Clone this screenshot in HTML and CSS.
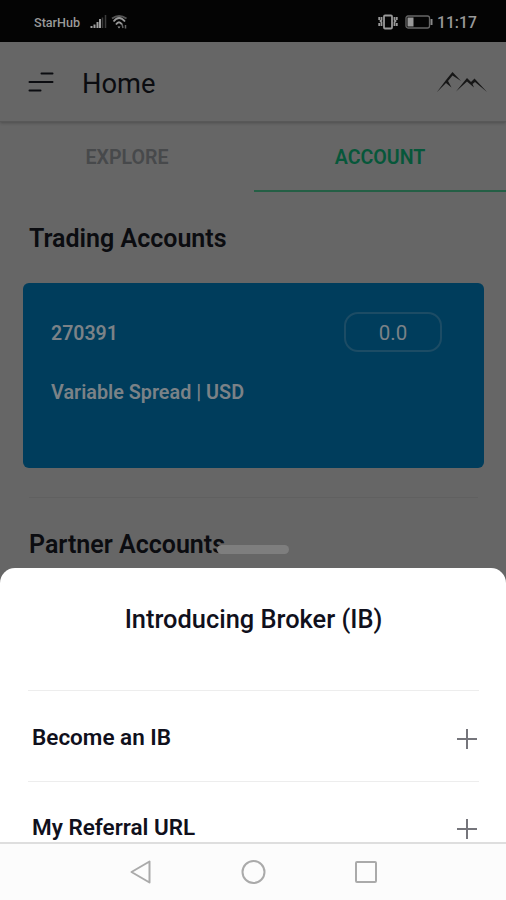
FILE: index.html
```html
<!DOCTYPE html>
<html lang="en">
<head>
	<meta charset="UTF-8">
	<title>Home</title>
	<link rel="stylesheet" href="styles.css">
</head>
<body>
	<div class="phone">
		<div class="status">
			<span class="carrier">StarHub</span>
			<svg class="signal" width="17" height="14" viewBox="0 0 17 14">
				<path d="M1.500 13v-2M4.500 13V9.500M7.500 13V7M10 13V4" stroke="#a0a0a0" stroke-width="2"/>
				<path d="M12.500 13V2.500M15.500 13V0" stroke="#3c3c3c" stroke-width="1.500"/>
			</svg>
			<svg class="wifi" width="17" height="14" viewBox="0 0 17 14" fill="none" stroke="#999" stroke-width="1.800">
				<path d="M1 3.500Q8-1.500 15.500 3.500" stroke="#555"/>
				<path d="M2.500 6.500Q8-.5 14 6.500M5 9.500Q8 5 11 9.500"/>
				<path d="M6.500 11.500h3L8 13.500z" fill="#999" stroke="none"/>
				<path d="M11 9l1 4M14.500 10v3.500" stroke="#666" stroke-width="1.500"/>
			</svg>
			<svg class="vibrate" width="20" height="16" viewBox="0 0 20 16" fill="none" stroke="#999" stroke-width="1.800">
				<rect x="6" y="1.500" width="8" height="13" rx="1"/>
				<path d="M3.500 3v3l-1 1 1 1v4M1.200 3v3M1.200 9v3M16.500 3v3l1 1-1 1v4M18.800 3v3M18.800 9v3"/>
			</svg>
			<svg class="battery" width="28" height="14" viewBox="0 0 28 14">
				<rect x="1" y="1" width="23.500" height="12" rx="2" fill="none" stroke="#666" stroke-width="1.300"/>
				<path d="M2.500 2.500h6v9h-6z" fill="#999"/>
				<path d="M25.500 4h2v6h-2z" fill="#888"/>
			</svg>
			<span class="time">11:17</span>
		</div>
		<div class="header">
			<svg class="menu" width="26" height="22" viewBox="0 0 26 22" stroke="#0b0c10" stroke-width="2" stroke-linecap="round">
				<path d="M13.500 2.500h11M1.500 11h23M1.500 19.500h11"/>
			</svg>
			<h1>Home</h1>
			<svg class="logo" width="50" height="22" viewBox="0 0 50 22" fill="#161616">
				<path d="M0 21 9 9 15.500 1 24 10 15.500 4.500 11 10 14.500 16.500 9 12z"/>
				<path d="M19 20.500 30 7l4 4 3.500-3.500L50 21 38 11 35.500 13 37 16.500 30 10.500z"/>
			</svg>
		</div>
		<div class="tabs">
			<a>EXPLORE</a>
			<a class="cur">ACCOUNT</a>
		</div>
		<div class="content">
			<h2>Trading Accounts</h2>
			<div class="card">
				<div class="row">
					<span>270391</span>
					<span class="balance">0.0</span>
				</div>
				<p>Variable Spread | USD</p>
			</div>
			<h2 class="partner">Partner Accounts</h2>
		</div>
		<div class="sheet">
			<div class="handle"></div>
			<div class="panel">
				<h3>Introducing Broker (IB)</h3>
				<ul>
					<li><span>Become an IB</span><i class="plus"></i></li>
					<li><span>My Referral URL</span><i class="plus"></i></li>
				</ul>
			</div>
			<div class="nav">
				<svg width="24" height="26" viewBox="0 0 24 26"><path d="M3.500 13 21.500 2.500v21z"/></svg>
				<svg width="26" height="26" viewBox="0 0 26 26"><circle cx="13.500" cy="13" r="11"/></svg>
				<svg width="24" height="24" viewBox="0 0 24 24"><rect x="2" y="2" width="20" height="20" rx="1"/></svg>
			</div>
		</div>
	</div>
</body>
</html>
```

FILE: styles.css
```css
*{
	margin: 0;
	padding: 0;
	box-sizing: border-box;
}
body{
	font-family: Roboto, "Liberation Sans", sans-serif;
	color: #0b0c10;
}
h1, h2, h3{
	font-weight: 600;
}
.phone{
	position: relative;
	width: 506px;
	height: 900px;
	overflow: hidden;
	background-color: #666;
}
.status{
	display: flex;
	align-items: center;
	height: 42px;
	padding: 2px 30px 0 34px;
	background-color: #040404;
	color: #999;
}
.carrier{
	width: 56px;
	font-size: 12.6px;
	font-weight: 500;
}
.wifi{
	margin-left: 4px;
}
.vibrate{
	margin-left: auto;
}
.battery{
	margin: 0 4px 0 7px;
}
.time{
	width: 39px;
	font-size: 15.7px;
	font-weight: 500;
	white-space: nowrap;
}
.header{
	display: flex;
	align-items: center;
	height: 80px;
	padding: 1px 19px 0 28px;
	border-bottom: 1px solid #585858;
	box-shadow: 0 1px 3px rgba(0,0,0,.25);
}
.header h1{
	margin-left: 28px;
	padding-top: 3px;
	font-size: 27.3px;
	font-weight: 400;
}
.logo{
	margin-left: auto;
}
.tabs{
	display: flex;
	height: 70px;
	text-align: center;
	font-size: 19.6px;
	line-height: 71px;
}
.tabs a{
	flex: 1;
	color: #47494b;
	font-weight: 600;
}
.tabs a:first-child{
	padding-left: 1px;
}
.tabs .cur{
	margin-left: 1px;
	border-bottom: 2px solid #245f45;
	color: #07573a;
}
.content{
	padding: 0 22px 0 23px;
}
.content h2{
	padding: 31px 6px 0;
	font-size: 25px;
	line-height: 32px;
}
.card{
	height: 185px;
	margin-top: 28px;
	padding: 29px 42px 0 28px;
	border-radius: 6px;
	background-color: #003d5c;
	color: #7b8287;
	font-size: 19.5px;
	font-weight: 600;
}
.row{
	display: flex;
	justify-content: space-between;
	align-items: center;
}
.row span:first-child{
	padding-top: 2px;
}
.balance{
	width: 98px;
	height: 40px;
	border: 2px solid #1c4c65;
	border-radius: 14px;
	font-size: 20.5px;
	font-weight: 400;
	line-height: 38px;
	text-align: center;
}
.card p{
	margin-top: 29px;
	font-size: 19.8px;
}
.content .partner{
	margin: 29px 6px 0;
	padding: 31px 0 0;
	border-top: 1px solid #606060;
}
.sheet{
	position: absolute;
	left: 0;
	right: 0;
	bottom: 0;
}
.handle{
	width: 72px;
	height: 9px;
	margin: 0 auto 14px;
	border-radius: 5px;
	background-color: #7e7e7e;
}
.panel{
	height: 274px;
	padding: 34px 27px 0 28px;
	overflow: hidden;
	border-radius: 15px 15px 0 0;
	background-color: #fff;
	color: #10101c;
}
.panel h3{
	height: 88px;
	font-size: 25.4px;
	font-weight: 500;
	line-height: 34px;
	text-align: center;
}
.panel ul{
	list-style: none;
}
.panel li{
	display: flex;
	justify-content: space-between;
	height: 91px;
	padding: 33px 2px 0 4px;
	border-top: 1px solid #ededed;
	font-size: 22.5px;
	font-weight: 600;
	line-height: 26px;
}
.panel li + li{
	padding-top: 32px;
}
.plus{
	width: 20px;
	height: 20px;
	margin-top: 5px;
	background: linear-gradient(#75757b, #75757b) center / 20px 2px no-repeat,
		linear-gradient(#75757b, #75757b) center / 2px 20px no-repeat;
}
.nav{
	display: flex;
	justify-content: center;
	align-items: center;
	gap: 88px;
	height: 58px;
	border-top: 2px solid #dedede;
	background-color: #fcfcfc;
}
.nav svg{
	fill: none;
	stroke: #aaa;
	stroke-width: 2;
	stroke-linejoin: round;
}
```
